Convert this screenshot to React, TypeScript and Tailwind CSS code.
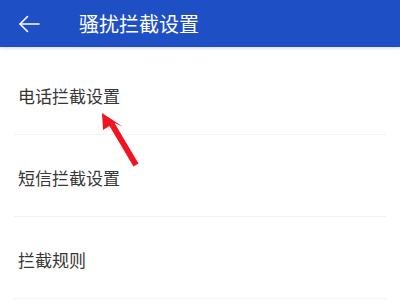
const rows = ["电话拦截设置", "短信拦截设置", "拦截规则"];

function BackArrow() {
  return (
    <svg width="22" height="18" viewBox="0 0 22 18" fill="none" stroke="white" strokeWidth="1.6" strokeLinecap="round" strokeLinejoin="round">
      <path d="M21 9H2" />
      <path d="M9.5 1.5L2 9l7.5 7.5" />
    </svg>
  );
}

function RedPointer() {
  return (
    <svg className="pointer-events-none absolute left-0 top-0" width="400" height="300" viewBox="0 0 400 300">
      <path d="M102 113 L103 130 L109.5 126 L133.5 166.5 L138.5 163.5 L114.5 123 L122.5 126.5 Z" fill="#f0141e" />
    </svg>
  );
}

export default function App() {
  return (
    <div className="relative h-[300px] w-[400px] overflow-hidden bg-white font-['Noto_Sans_CJK_SC',sans-serif]">
      <header className="flex h-[47px] items-center bg-[#1f4fc5] shadow-[0_1px_3px_rgba(0,0,0,0.18)]">
        <div className="ml-[18px] flex w-[22px] items-center">
          <BackArrow />
        </div>
        <h1 className="ml-[39px] text-[20px] leading-none text-white">骚扰拦截设置</h1>
      </header>
      <div className="pt-[6px]">
        {rows.map((label) => (
          <div key={label} className="mx-[14px] h-[82px] border-b border-[#f3f3f3] pt-[31px]">
            <p className="pl-[4px] text-[17px] leading-[24px] text-[#363636]">{label}</p>
          </div>
        ))}
      </div>
      <RedPointer />
    </div>
  );
}
